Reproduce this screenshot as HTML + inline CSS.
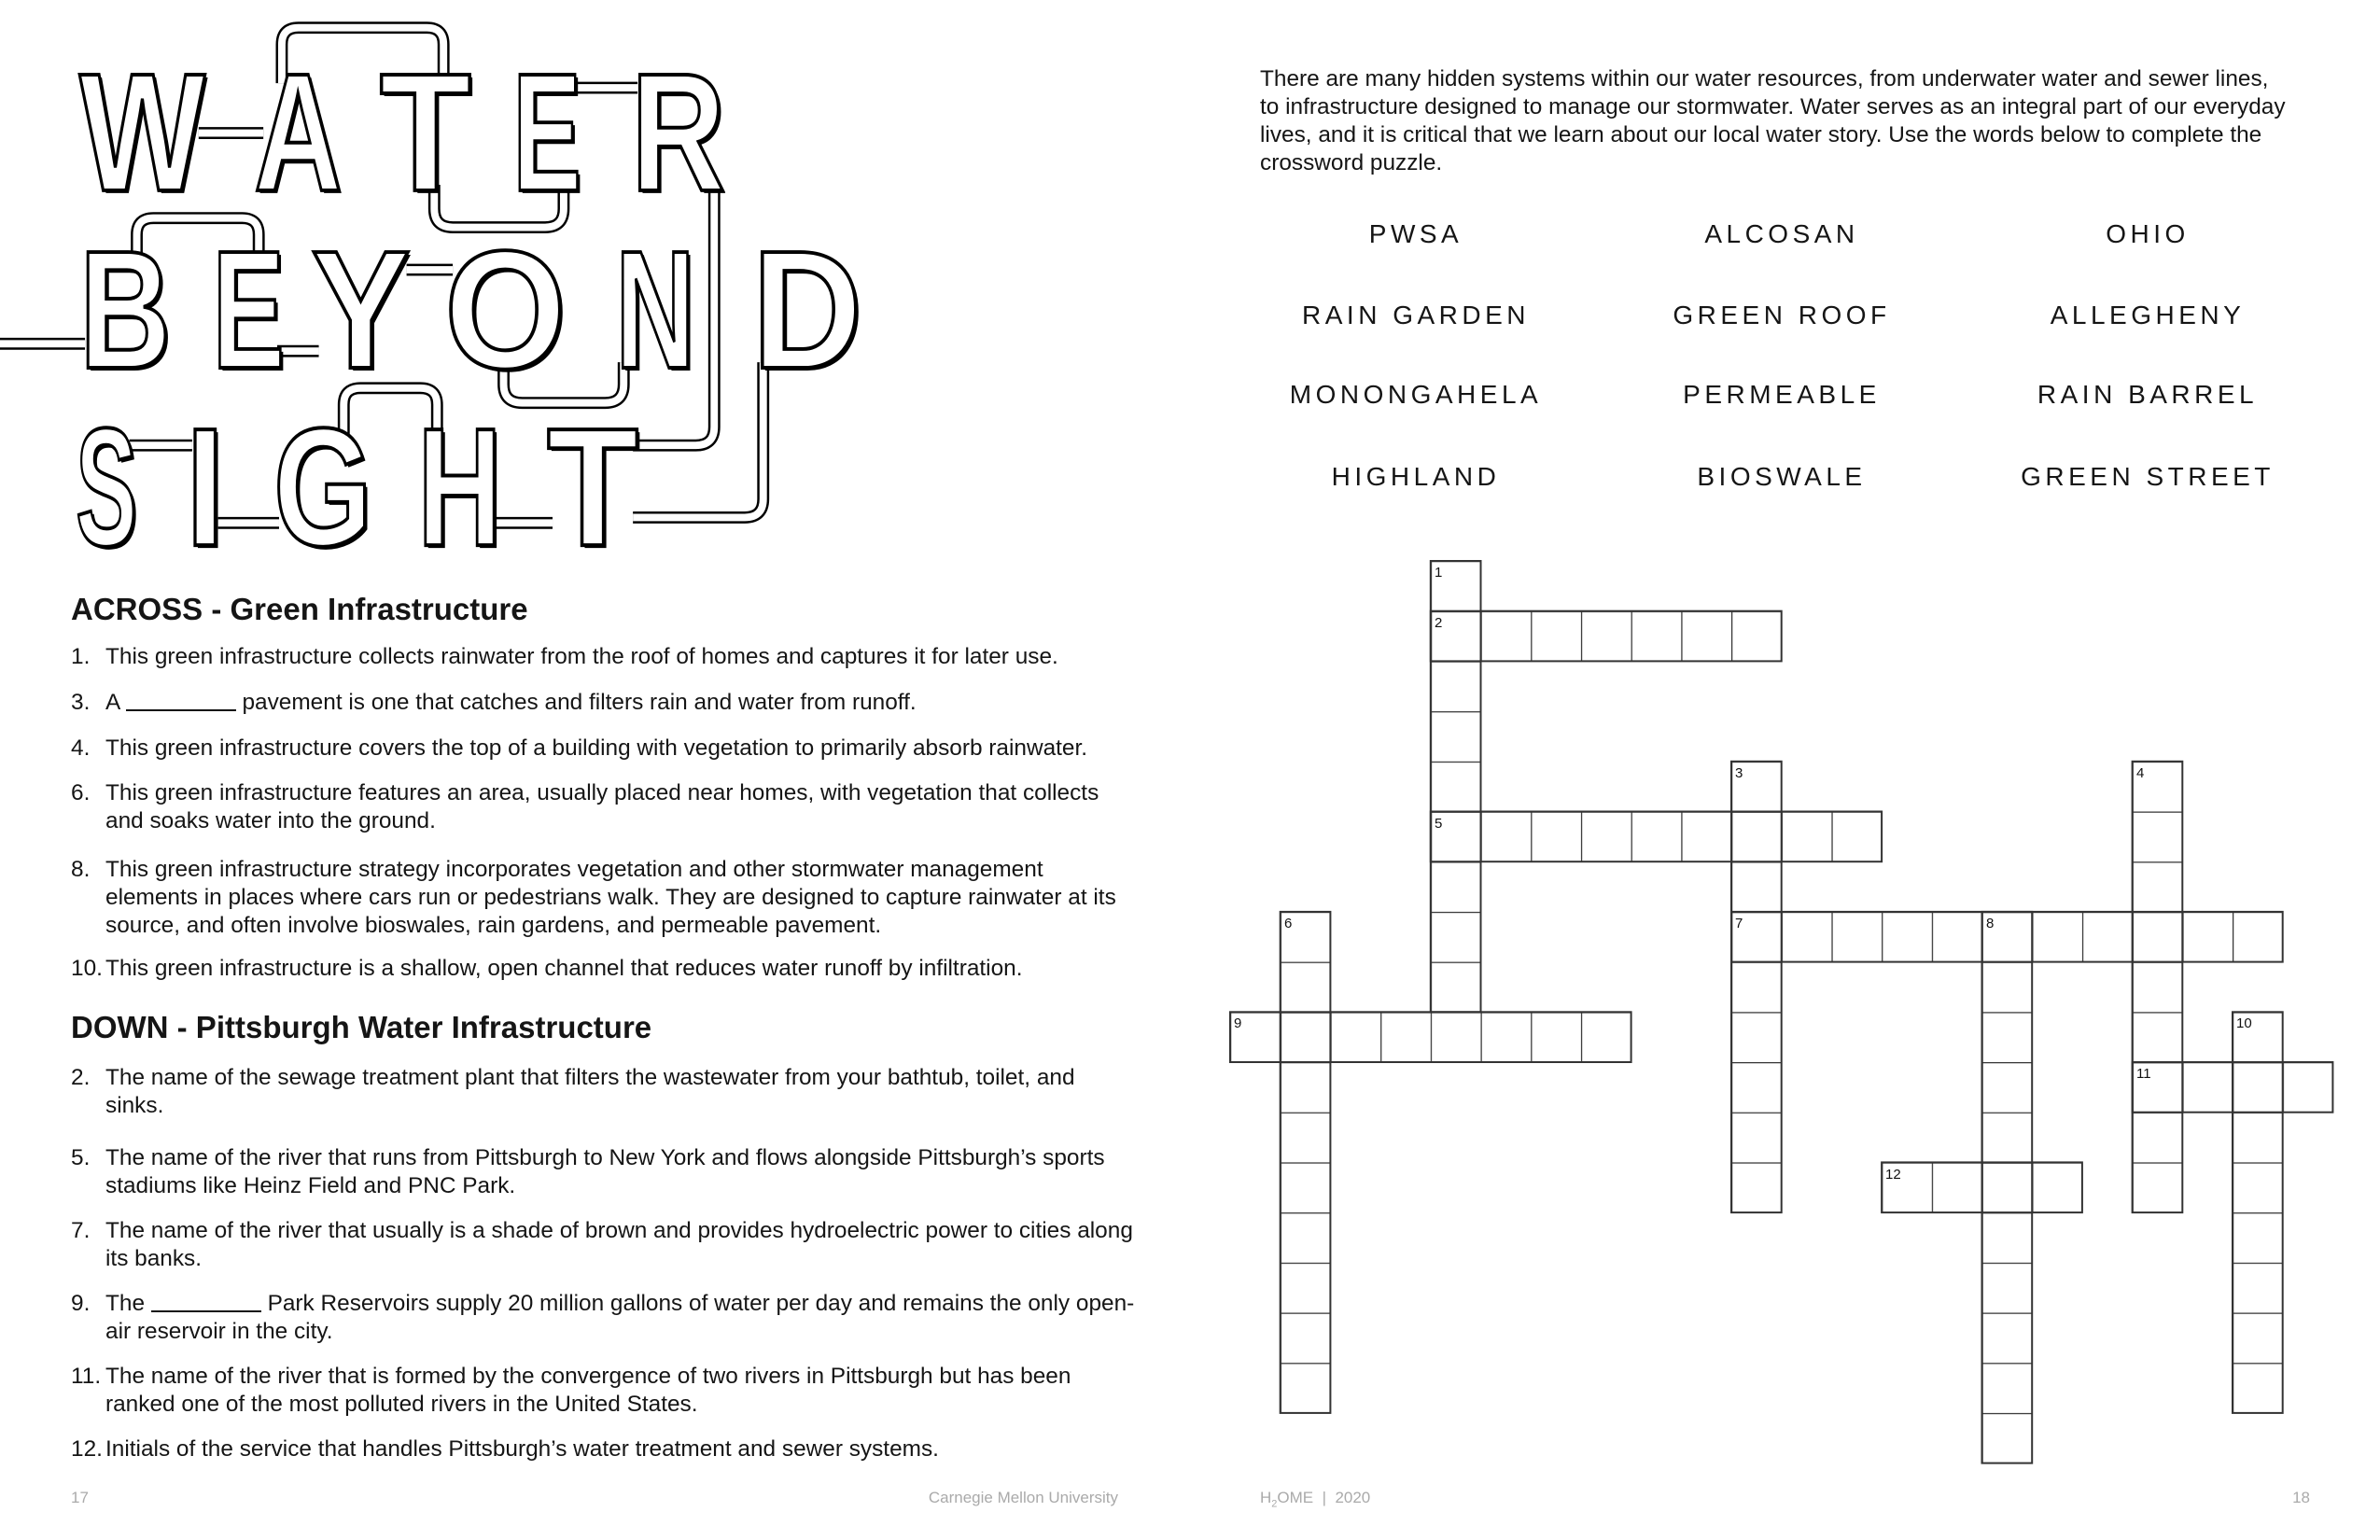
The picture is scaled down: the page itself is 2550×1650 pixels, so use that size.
<!DOCTYPE html>
<html><head><meta charset="utf-8">
<style>
html,body{margin:0;padding:0;background:#fff;}
body{width:2550px;height:1650px;position:relative;overflow:hidden;font-family:"Liberation Sans",sans-serif;color:#151515;}
.t{position:absolute;white-space:nowrap;font-size:24.4px;line-height:30px;}
.h{position:absolute;white-space:nowrap;font-size:33px;font-weight:bold;line-height:38px;}
.w{position:absolute;white-space:nowrap;font-size:28px;letter-spacing:4.5px;line-height:34px;transform:translateX(-50%);}
.f{position:absolute;white-space:nowrap;font-size:17px;color:#aaa;line-height:20px;}
</style></head><body>

<svg width="2550" height="1650" style="position:absolute;left:0;top:0">
<defs>
<pattern id="g" patternUnits="userSpaceOnUse" x="1318" y="601" width="53.7" height="53.7">
<path d="M0 0H53.7M0 0V53.7" stroke="#333" stroke-width="2.5" fill="none"/>
</pattern>
</defs>
<g transform="scale(0.99)">
<g fill="none" stroke-linejoin="round" stroke-linecap="butt">
<g stroke="#000" stroke-width="13">
<path d="M305 90 V48 Q305 30 323 30 H462 Q480 30 480 48 V90"/>
<path d="M215 144 H285"/>
<path d="M620 95 H690"/>
<path d="M470 200 V226 Q470 246 490 246 H590 Q610 246 610 226 V200"/>
<path d="M773 200 V462 Q773 482 753 482 H685"/>
<path d="M148 280 V254 Q148 236 166 236 H262 Q280 236 280 254 V280"/>
<path d="M0 372 H92"/>
<path d="M440 292 H490"/>
<path d="M300 380 H345"/>
<path d="M545 392 V416 Q545 436 565 436 H655 Q675 436 675 416 V392"/>
<path d="M826 392 V540 Q826 560 806 560 H685"/>
<path d="M372 470 V438 Q372 420 390 420 H455 Q473 420 473 438 V470"/>
<path d="M140 482 H208"/>
<path d="M236 566 H302"/>
<path d="M536 566 H598"/>
</g>
<g stroke="#fff" stroke-width="8">
<path d="M305 90 V48 Q305 30 323 30 H462 Q480 30 480 48 V90"/>
<path d="M215 144 H285"/>
<path d="M620 95 H690"/>
<path d="M470 200 V226 Q470 246 490 246 H590 Q610 246 610 226 V200"/>
<path d="M773 200 V462 Q773 482 753 482 H685"/>
<path d="M148 280 V254 Q148 236 166 236 H262 Q280 236 280 254 V280"/>
<path d="M0 372 H92"/>
<path d="M440 292 H490"/>
<path d="M300 380 H345"/>
<path d="M545 392 V416 Q545 436 565 436 H655 Q675 436 675 416 V392"/>
<path d="M826 392 V540 Q826 560 806 560 H685"/>
<path d="M372 470 V438 Q372 420 390 420 H455 Q473 420 473 438 V470"/>
<path d="M140 482 H208"/>
<path d="M236 566 H302"/>
<path d="M536 566 H598"/>
</g>
</g>
<g font-family="Liberation Sans, sans-serif" font-weight="bold" font-size="182">
<g fill="#000" transform="translate(3,3)">
<text x="86" y="206" textLength="136" lengthAdjust="spacingAndGlyphs">W</text>
<text x="275" y="206" textLength="95" lengthAdjust="spacingAndGlyphs">A</text>
<text x="411" y="206" textLength="99" lengthAdjust="spacingAndGlyphs">T</text>
<text x="555" y="206" textLength="74" lengthAdjust="spacingAndGlyphs">E</text>
<text x="683" y="206" textLength="102" lengthAdjust="spacingAndGlyphs">R</text>
<text x="86" y="398" textLength="99" lengthAdjust="spacingAndGlyphs">B</text>
<text x="230" y="398" textLength="78" lengthAdjust="spacingAndGlyphs">E</text>
<text x="337" y="398" textLength="107" lengthAdjust="spacingAndGlyphs">Y</text>
<text x="481" y="398" textLength="132" lengthAdjust="spacingAndGlyphs">O</text>
<text x="666" y="398" textLength="86" lengthAdjust="spacingAndGlyphs">N</text>
<text x="814" y="398" textLength="119" lengthAdjust="spacingAndGlyphs">D</text>
<text x="82" y="590" textLength="66" lengthAdjust="spacingAndGlyphs">S</text>
<text x="201" y="590" textLength="42" lengthAdjust="spacingAndGlyphs">I</text>
<text x="296" y="590" textLength="107" lengthAdjust="spacingAndGlyphs">G</text>
<text x="452" y="590" textLength="91" lengthAdjust="spacingAndGlyphs">H</text>
<text x="592" y="590" textLength="99" lengthAdjust="spacingAndGlyphs">T</text>
</g>
<g fill="#fff" stroke="#000" stroke-width="4">
<text x="86" y="206" textLength="136" lengthAdjust="spacingAndGlyphs">W</text>
<text x="275" y="206" textLength="95" lengthAdjust="spacingAndGlyphs">A</text>
<text x="411" y="206" textLength="99" lengthAdjust="spacingAndGlyphs">T</text>
<text x="555" y="206" textLength="74" lengthAdjust="spacingAndGlyphs">E</text>
<text x="683" y="206" textLength="102" lengthAdjust="spacingAndGlyphs">R</text>
<text x="86" y="398" textLength="99" lengthAdjust="spacingAndGlyphs">B</text>
<text x="230" y="398" textLength="78" lengthAdjust="spacingAndGlyphs">E</text>
<text x="337" y="398" textLength="107" lengthAdjust="spacingAndGlyphs">Y</text>
<text x="481" y="398" textLength="132" lengthAdjust="spacingAndGlyphs">O</text>
<text x="666" y="398" textLength="86" lengthAdjust="spacingAndGlyphs">N</text>
<text x="814" y="398" textLength="119" lengthAdjust="spacingAndGlyphs">D</text>
<text x="82" y="590" textLength="66" lengthAdjust="spacingAndGlyphs">S</text>
<text x="201" y="590" textLength="42" lengthAdjust="spacingAndGlyphs">I</text>
<text x="296" y="590" textLength="107" lengthAdjust="spacingAndGlyphs">G</text>
<text x="452" y="590" textLength="91" lengthAdjust="spacingAndGlyphs">H</text>
<text x="592" y="590" textLength="99" lengthAdjust="spacingAndGlyphs">T</text>
</g>
</g>
</g>

<g fill="url(#g)" stroke="#333" stroke-width="2">
<rect x="1532.8" y="601" width="53.7" height="483.3"/>
<rect x="1532.8" y="654.7" width="375.9" height="53.7"/>
<rect x="1855" y="815.8" width="53.7" height="483.3"/>
<rect x="2284.6" y="815.8" width="53.7" height="483.3"/>
<rect x="1532.8" y="869.5" width="483.3" height="53.7"/>
<rect x="1371.7" y="976.9" width="53.7" height="537"/>
<rect x="1855" y="976.9" width="590.7" height="53.7"/>
<rect x="2123.5" y="976.9" width="53.7" height="590.7"/>
<rect x="1318" y="1084.3" width="429.6" height="53.7"/>
<rect x="2392" y="1084.3" width="53.7" height="429.6"/>
<rect x="2284.6" y="1138" width="214.8" height="53.7"/>
<rect x="2016.1" y="1245.4" width="214.8" height="53.7"/>
</g>
<g font-family="Liberation Sans, sans-serif" font-size="15" fill="#111">
<text x="1537" y="618">1</text>
<text x="1537" y="672">2</text>
<text x="1859" y="833">3</text>
<text x="2289" y="833">4</text>
<text x="1537" y="887">5</text>
<text x="1376" y="994">6</text>
<text x="1859" y="994">7</text>
<text x="2128" y="994">8</text>
<text x="1322" y="1101">9</text>
<text x="2396" y="1101">10</text>
<text x="2289" y="1155">11</text>
<text x="2020" y="1263">12</text>
</g>
</svg>

<div class="h" style="left:76px;top:634px">ACROSS - Green Infrastructure</div>
<div class="t" style="left:76px;top:689px">1.</div><div class="t" style="left:113px;top:689px">This green infrastructure collects rainwater from the roof of homes and captures it for later use.</div>
<div class="t" style="left:76px;top:738px">3.</div><div class="t" style="left:113px;top:738px">A <span style="display:inline-block;width:118px;border-bottom:2px solid #111;height:20px;vertical-align:-2px"></span> pavement is one that catches and filters rain and water from runoff.</div>
<div class="t" style="left:76px;top:787px">4.</div><div class="t" style="left:113px;top:787px">This green infrastructure covers the top of a building with vegetation to primarily absorb rainwater.</div>
<div class="t" style="left:76px;top:835px">6.</div><div class="t" style="left:113px;top:835px">This green infrastructure features an area, usually placed near homes, with vegetation that collects<br>and soaks water into the ground.</div>
<div class="t" style="left:76px;top:917px">8.</div><div class="t" style="left:113px;top:917px">This green infrastructure strategy incorporates vegetation and other stormwater management<br>elements in places where cars run or pedestrians walk. They are designed to capture rainwater at its<br>source, and often involve bioswales, rain gardens, and permeable pavement.</div>
<div class="t" style="left:76px;top:1023px">10.</div><div class="t" style="left:113px;top:1023px">This green infrastructure is a shallow, open channel that reduces water runoff by infiltration.</div>

<div class="h" style="left:76px;top:1082px">DOWN - Pittsburgh Water Infrastructure</div>
<div class="t" style="left:76px;top:1140px">2.</div><div class="t" style="left:113px;top:1140px">The name of the sewage treatment plant that filters the wastewater from your bathtub, toilet, and<br>sinks.</div>
<div class="t" style="left:76px;top:1226px">5.</div><div class="t" style="left:113px;top:1226px">The name of the river that runs from Pittsburgh to New York and flows alongside Pittsburgh’s sports<br>stadiums like Heinz Field and PNC Park.</div>
<div class="t" style="left:76px;top:1304px">7.</div><div class="t" style="left:113px;top:1304px">The name of the river that usually is a shade of brown and provides hydroelectric power to cities along<br>its banks.</div>
<div class="t" style="left:76px;top:1382px">9.</div><div class="t" style="left:113px;top:1382px">The <span style="display:inline-block;width:118px;border-bottom:2px solid #111;height:20px;vertical-align:-2px"></span> Park Reservoirs supply 20 million gallons of water per day and remains the only open-<br>air reservoir in the city.</div>
<div class="t" style="left:76px;top:1460px">11.</div><div class="t" style="left:113px;top:1460px">The name of the river that is formed by the convergence of two rivers in Pittsburgh but has been<br>ranked one of the most polluted rivers in the United States.</div>
<div class="t" style="left:76px;top:1538px">12.</div><div class="t" style="left:113px;top:1538px">Initials of the service that handles Pittsburgh’s water treatment and sewer systems.</div>

<div class="f" style="left:76px;top:1595px">17</div>
<div class="f" style="right:1352px;top:1595px">Carnegie Mellon University</div>
<div class="f" style="left:1350px;top:1595px">H<sub style="font-size:11px">2</sub>OME &nbsp;| &nbsp;2020</div>
<div class="f" style="right:75px;top:1595px">18</div>

<div class="t" style="left:1350px;top:70px">There are many hidden systems within our water resources, from underwater water and sewer lines,<br>to infrastructure designed to manage our stormwater. Water serves as an integral part of our everyday<br>lives, and it is critical that we learn about our local water story. Use the words below to complete the<br>crossword puzzle.</div>

<div class="w" style="left:1517px;top:234px">PWSA</div>
<div class="w" style="left:1909px;top:234px">ALCOSAN</div>
<div class="w" style="left:2301px;top:234px">OHIO</div>
<div class="w" style="left:1517px;top:321px">RAIN GARDEN</div>
<div class="w" style="left:1909px;top:321px">GREEN ROOF</div>
<div class="w" style="left:2301px;top:321px">ALLEGHENY</div>
<div class="w" style="left:1517px;top:406px">MONONGAHELA</div>
<div class="w" style="left:1909px;top:406px">PERMEABLE</div>
<div class="w" style="left:2301px;top:406px">RAIN BARREL</div>
<div class="w" style="left:1517px;top:494px">HIGHLAND</div>
<div class="w" style="left:1909px;top:494px">BIOSWALE</div>
<div class="w" style="left:2301px;top:494px">GREEN STREET</div>

</body></html>
